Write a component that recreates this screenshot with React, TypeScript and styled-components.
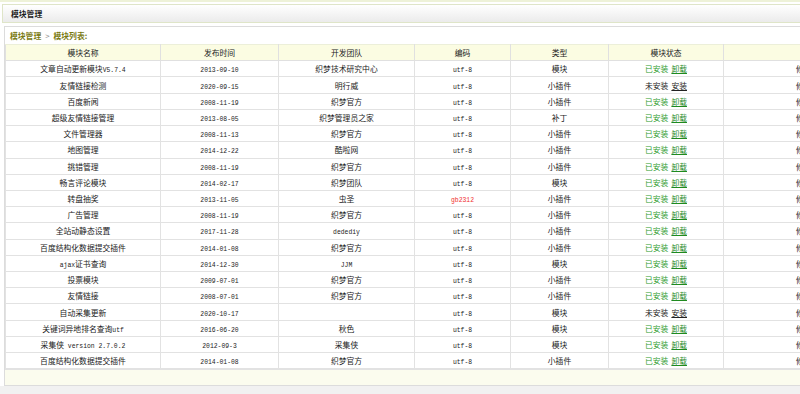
import React from 'react';
import styled, { createGlobalStyle } from 'styled-components';

const GlobalStyle = createGlobalStyle`
  html, body {
    margin: 0;
    padding: 0;
    background: #f1f1f1;
    overflow: hidden;
  }
  body {
    font-family: "Noto Sans CJK SC", "Liberation Sans", sans-serif;
    font-size: 7.8px;
    color: #222;
  }
`;

const PageWrapper = styled.div`
  width: 1000px;
  background: #fff;
  border-top: 2px solid #eef2d8;
`;

const TitleBar = styled.div`
  margin: 2px 0 0 2px;
  height: 17px;
  display: flex;
  align-items: center;
  padding-left: 8px;
  border: 1px solid #dfe5c8;
  background: linear-gradient(#ffffff, #ebebeb);
  font-weight: 700;
  color: #1e1e1e;
`;

const Panel = styled.div`
  margin: 3px 0 0 4px;
  background: #fff;
  border: 1px solid #dcdcdc;
  border-right: none;
`;

const Crumbs = styled.div`
  height: 17px;
  display: flex;
  align-items: center;
  gap: 4px;
  padding-left: 5px;
  font-weight: 700;
  color: #7a7a12;
`;

const Sep = styled.span`
  color: #888;
  font-weight: 400;
`;

const Table = styled.table`
  border-collapse: collapse;
  table-layout: fixed;
  width: 960px;
`;

const Col = styled.col<{ $w: number }>`
  width: ${({ $w }) => $w}px;
`;

const HeadCell = styled.th`
  height: 15.2px;
  padding: 0;
  background: #fbfce2;
  border: 1px solid #e0e0e0;
  border-top: 1px solid #ecefd9;
  font-weight: 400;
  text-align: center;
  color: #222;
`;

const Cell = styled.td<{ $tone?: 'red' }>`
  height: 15.22px;
  padding: 0;
  border: 1px solid #e2e2e2;
  text-align: center;
  white-space: nowrap;
  overflow: hidden;
  color: ${({ $tone }) => ($tone === 'red' ? '#f03030' : '#222')};
`;

const ManageCell = styled(Cell)`
  text-align: left;
  padding-left: 72px;
`;

const Mono = styled.span`
  font-family: "Liberation Mono", "DejaVu Sans Mono", monospace;
  font-size: 6.4px;
`;

const Status = styled.span<{ $installed: boolean }>`
  color: ${({ $installed }) => ($installed ? '#2d9a2d' : '#222')};
  margin-right: 3px;
`;

const Action = styled.a<{ $installed: boolean }>`
  color: ${({ $installed }) => ($installed ? '#1f8a1f' : '#222')};
  text-decoration: underline;
  cursor: pointer;
`;

const FooterBand = styled.div`
  height: 15px;
  background: #fbfcee;
  border-top: 1px solid #e2e2e2;
`;

type Row = {
  name: string;
  date: string;
  team: string;
  enc: string;
  kind: string;
  installed: boolean;
};

const rows: Row[] = [
  { name: '文章自动更新模块V5.7.4', date: '2013-09-10', team: '织梦技术研究中心', enc: 'utf-8', kind: '模块', installed: true },
  { name: '友情链接检测', date: '2020-09-15', team: '明行威', enc: 'utf-8', kind: '小插件', installed: false },
  { name: '百度新闻', date: '2008-11-19', team: '织梦官方', enc: 'utf-8', kind: '小插件', installed: true },
  { name: '超级友情链接管理', date: '2013-08-05', team: '织梦管理员之家', enc: 'utf-8', kind: '补丁', installed: true },
  { name: '文件管理器', date: '2008-11-13', team: '织梦官方', enc: 'utf-8', kind: '小插件', installed: true },
  { name: '地图管理', date: '2014-12-22', team: '酷啦网', enc: 'utf-8', kind: '小插件', installed: true },
  { name: '挑错管理', date: '2008-11-19', team: '织梦官方', enc: 'utf-8', kind: '小插件', installed: true },
  { name: '畅言评论模块', date: '2014-02-17', team: '织梦团队', enc: 'utf-8', kind: '模块', installed: true },
  { name: '转盘抽奖', date: '2013-11-05', team: '虫圣', enc: 'gb2312', kind: '小插件', installed: true },
  { name: '广告管理', date: '2008-11-19', team: '织梦官方', enc: 'utf-8', kind: '小插件', installed: true },
  { name: '全站动静态设置', date: '2017-11-28', team: 'dedediy', enc: 'utf-8', kind: '小插件', installed: true },
  { name: '百度结构化数据提交插件', date: '2014-01-08', team: '织梦官方', enc: 'utf-8', kind: '小插件', installed: true },
  { name: 'ajax证书查询', date: '2014-12-30', team: 'JJM', enc: 'utf-8', kind: '模块', installed: true },
  { name: '投票模块', date: '2009-07-01', team: '织梦官方', enc: 'utf-8', kind: '小插件', installed: true },
  { name: '友情链接', date: '2008-07-01', team: '织梦官方', enc: 'utf-8', kind: '小插件', installed: true },
  { name: '自动采集更新', date: '2020-10-17', team: '', enc: 'utf-8', kind: '模块', installed: false },
  { name: '关键词异地排名查询utf', date: '2016-06-20', team: '秋色', enc: 'utf-8', kind: '模块', installed: true },
  { name: '采集侠 version 2.7.0.2', date: '2012-09-3', team: '采集侠', enc: 'utf-8', kind: '模块', installed: true },
  { name: '百度结构化数据提交插件', date: '2014-01-08', team: '织梦官方', enc: 'utf-8', kind: '小插件', installed: true },
];

// widths taken from the divider positions: 4 | 159 | 277 | 413 | 509 | 607 | 722
const columns = [
  { title: '模块名称', w: 155 },
  { title: '发布时间', w: 118 },
  { title: '开发团队', w: 136 },
  { title: '编码', w: 96 },
  { title: '类型', w: 98 },
  { title: '模块状态', w: 115 },
  { title: '', w: 242 },
];

// ascii runs render in the narrow mono face, like the old bitmap font
const mixed = (text: string) =>
  text.split(/([\x20-\x7e]+)/).map((part, i) =>
    /^[\x20-\x7e]+$/.test(part) ? <Mono key={i}>{part}</Mono> : <React.Fragment key={i}>{part}</React.Fragment>
  );

export default function App() {
  return (
    <>
      <GlobalStyle />
      <PageWrapper>
        <TitleBar>模块管理</TitleBar>
        <Panel>
          <Crumbs>
            <span>模块管理</span>
            <Sep>&gt;</Sep>
            <span>模块列表:</span>
          </Crumbs>
          <Table>
            <colgroup>
              {columns.map((c, i) => (
                <Col key={i} $w={c.w} />
              ))}
            </colgroup>
            <thead>
              <tr>
                {columns.map((c, i) => (
                  <HeadCell key={i}>{c.title}</HeadCell>
                ))}
              </tr>
            </thead>
            <tbody>
              {rows.map((r, i) => (
                <tr key={i}>
                  <Cell>{mixed(r.name)}</Cell>
                  <Cell><Mono>{r.date}</Mono></Cell>
                  <Cell>{mixed(r.team)}</Cell>
                  <Cell $tone={r.enc === 'gb2312' ? 'red' : undefined}><Mono>{r.enc}</Mono></Cell>
                  <Cell>{r.kind}</Cell>
                  <Cell>
                    <Status $installed={r.installed}>{r.installed ? '已安装' : '未安装'}</Status>
                    <Action $installed={r.installed}>{r.installed ? '卸载' : '安装'}</Action>
                  </Cell>
                  <ManageCell>修改</ManageCell>
                </tr>
              ))}
            </tbody>
          </Table>
          <FooterBand />
        </Panel>
      </PageWrapper>
    </>
  );
}
